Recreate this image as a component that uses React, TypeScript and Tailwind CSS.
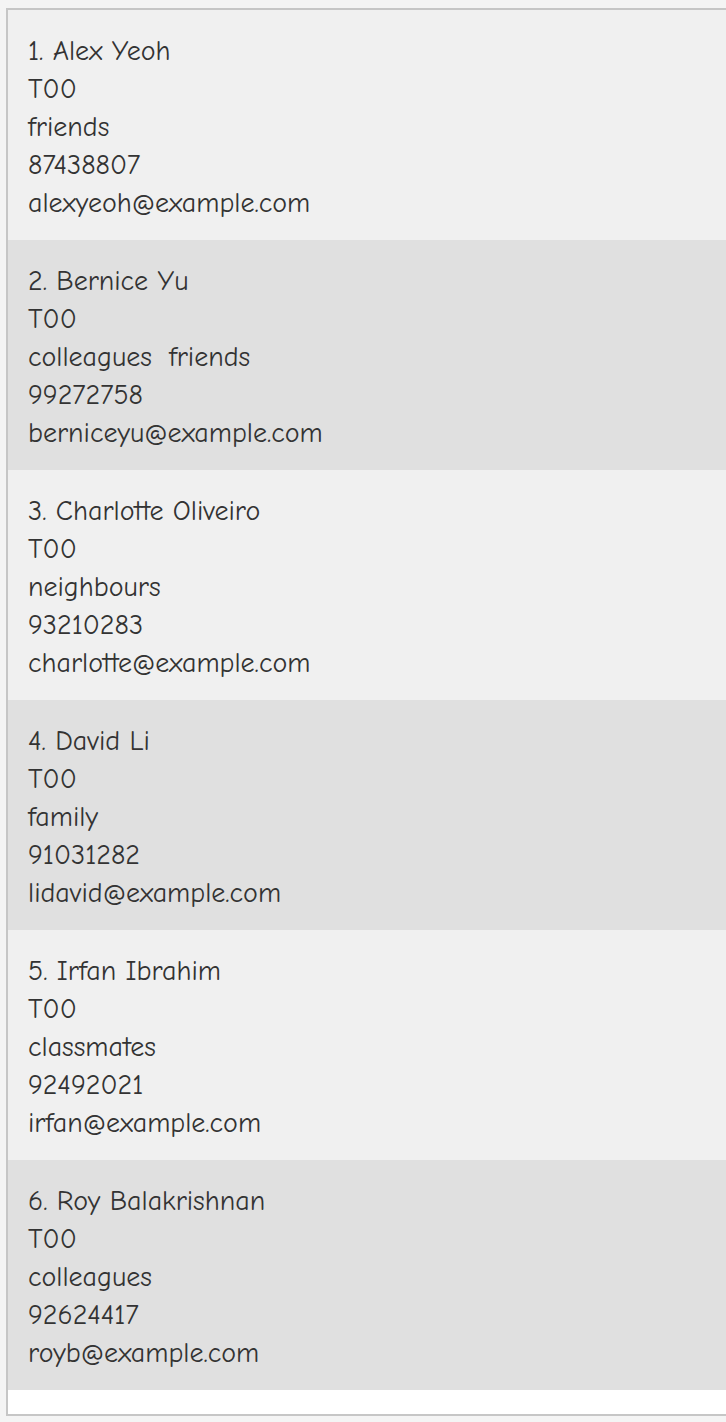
import React from "react";

const people = [
  { n: "1. Alex Yeoh", tags: ["friends"], phone: "87438807", email: "alexyeoh@example.com" },
  { n: "2. Bernice Yu", tags: ["colleagues", "friends"], phone: "99272758", email: "berniceyu@example.com" },
  { n: "3. Charlotte Oliveiro", tags: ["neighbours"], phone: "93210283", email: "charlotte@example.com" },
  { n: "4. David Li", tags: ["family"], phone: "91031282", email: "lidavid@example.com" },
  { n: "5. Irfan Ibrahim", tags: ["classmates"], phone: "92492021", email: "irfan@example.com" },
  { n: "6. Roy Balakrishnan", tags: ["colleagues"], phone: "92624417", email: "royb@example.com" },
];

export default function App() {
  return (
    <div className="w-[726px] h-[1422px] overflow-hidden bg-[#f4f4f4] pt-[8px] pl-[6px]">
      <div className="w-[740px] border-2 border-[#c6c6c6] bg-white pb-[24px]" style={{ fontFamily: '"Comic Sans MS", "Comic Neue", "Open Sans", sans-serif' }}>
        {people.map((p, i) => (
          <div
            key={i}
            className={`h-[230px] pl-[20px] pt-[22px] text-[28px] leading-[38px] text-[#333333] ${i % 2 === 0 ? "bg-[#f0f0f0]" : "bg-[#e0e0e0]"}`}
          >
            <div>{p.n}</div>
            <div>T00</div>
            <div className="flex gap-[17px]">
              {p.tags.map((t) => (
                <span key={t}>{t}</span>
              ))}
            </div>
            <div>{p.phone}</div>
            <div>{p.email}</div>
          </div>
        ))}
      </div>
    </div>
  );
}
